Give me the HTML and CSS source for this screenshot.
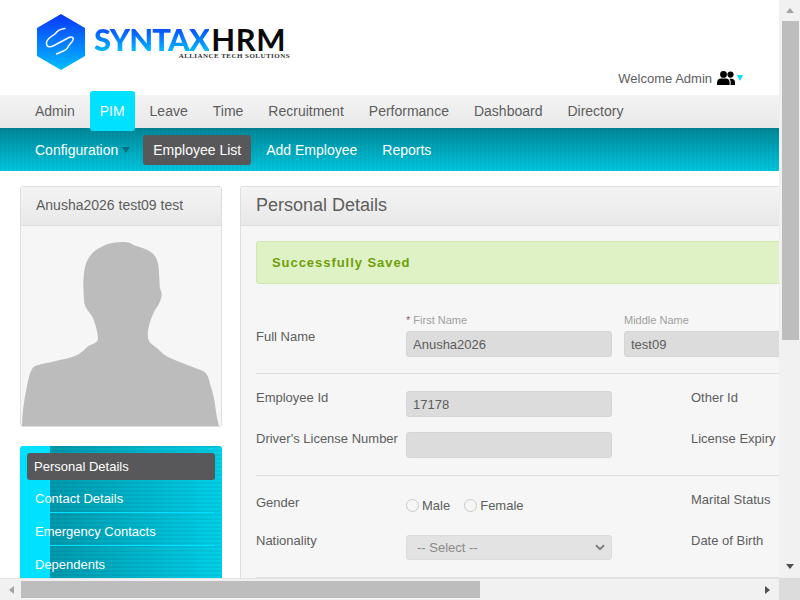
FILE: index.html
```html
<!DOCTYPE html>
<html lang="en">
<head>
  <meta charset="UTF-8">
  <title>SyntaxHRM - Personal Details</title>
  <link rel="stylesheet" href="styles.css">
</head>
<body>
  <div class="screen">
    <div class="viewport">
      <header class="top">
        <div class="brand">
          <svg class="brand-mark" width="48" height="56" viewBox="37 14 48 56">
            <defs>
              <linearGradient id="hex" x1="0" y1="0" x2="0" y2="1">
                <stop offset="0" stop-color="#0a35ff"/>
                <stop offset="1" stop-color="#00bfff"/>
              </linearGradient>
            </defs>
            <path d="M61 14 85 28V56L61 70 37 56V28Z" fill="url(#hex)"/>
            <path d="M65 28.5C60 29 57 31 55 34L52 36C49 38 46 41 46.5 44 47 48 51 47 54 45.5L69 37.5C72 36 74 38 73 40 72 43 69 44 68 47 67 50 64 51 61 52L56.5 54" fill="none" stroke="#fff" stroke-width="1.5" stroke-linecap="round"/>
          </svg>
          <div class="brand-text">
            <div class="wordmark"><span class="wordmark-blue">SYNTAX</span><span class="wordmark-dark">HRM</span></div>
            <div class="tagline">ALLIANCE TECH SOLUTIONS</div>
          </div>
        </div>
        <div class="welcome">
          <span>Welcome Admin</span>
          <svg class="users" width="18" height="14" viewBox="0 0 18 14">
            <circle cx="6.5" cy="3.4" r="3.4" fill="#000"/>
            <circle cx="13.5" cy="3.6" r="3.1" fill="#000"/>
            <path d="M0 14V11.5C0 9 2 7.6 4 7.6H9C11 7.6 12.6 9 12.6 11.5V14Z" fill="#000"/>
            <path d="M13.6 14V11C13.6 9.6 13 8.5 12.4 7.7H14.6C16.6 7.7 18 9.2 18 11.4V14Z" fill="#000"/>
          </svg>
          <span class="welcome-caret"></span>
        </div>
      </header>

      <nav class="menu">
        <a class="menu-item">Admin</a>
        <a class="menu-item active">PIM</a>
        <a class="menu-item">Leave</a>
        <a class="menu-item">Time</a>
        <a class="menu-item">Recruitment</a>
        <a class="menu-item">Performance</a>
        <a class="menu-item">Dashboard</a>
        <a class="menu-item">Directory</a>
      </nav>

      <nav class="submenu">
        <a class="submenu-item">Configuration<span class="submenu-caret"></span></a>
        <a class="submenu-item active">Employee List</a>
        <a class="submenu-item">Add Employee</a>
        <a class="submenu-item">Reports</a>
      </nav>

      <div class="content">
        <aside class="side">
          <div class="card">
            <div class="card-head">Anusha2026 test09 test</div>
            <div class="photo">
              <svg width="200" height="200" viewBox="21 226 200 200">
                <path d="M22 426C22 414 24 400 27 386 29 376 31 368 35 366 48 362 64 360 75 356 80 354 84 350 87 347 91 344 98 343 98 339 98 334 96 326 93 318 90 312 84 308 84 300 83 288 83 276 85 267 88 254 97 248 108 244 115 242 124 241 130 243 135 247 145 247 152 253 158 258 159 266 159 274 160 282 159 287 161 291 163 296 160 303 155 310 151 318 147 328 148 338 149 344 154 345 158 349 162 353 165 356 170 358 180 362 192 367 203 371 207 373 209 378 210 384 213 392 215 402 216 412 217 418 218 422 219 426Z" fill="#bcbcbc"/>
              </svg>
            </div>
          </div>
          <ul class="side-menu">
            <li class="side-item active">Personal Details</li>
            <li class="side-item">Contact Details</li>
            <li class="side-item">Emergency Contacts</li>
            <li class="side-item">Dependents</li>
          </ul>
        </aside>

        <main class="panel">
          <h1 class="panel-head">Personal Details</h1>
          <div class="panel-body">
            <div class="saved">Successfully Saved</div>

            <section class="name-row">
              <label class="row-label">Full Name</label>
              <div class="name-field">
                <span class="small-label"><em>*</em> First Name</span>
                <input class="text-input" type="text" value="Anusha2026" disabled>
              </div>
              <div class="name-field">
                <span class="small-label">Middle Name</span>
                <input class="text-input" type="text" value="test09" disabled>
              </div>
            </section>

            <section class="field-grid ids">
              <label>Employee Id</label>
              <input class="text-input" type="text" value="17178" disabled>
              <label class="far">Other Id</label>
              <label>Driver's License Number</label>
              <input class="text-input" type="text" disabled>
              <label class="far">License Expiry</label>
            </section>

            <section class="field-grid personal">
              <label class="gender-label">Gender</label>
              <div class="radios">
                <span class="radio"></span>Male
                <span class="radio second"></span>Female
              </div>
              <label class="far">Marital Status</label>
              <label>Nationality</label>
              <select class="select-input" disabled><option>-- Select --</option></select>
              <label class="far">Date of Birth</label>
            </section>
          </div>
        </main>
      </div>
    </div>

    <div class="bar-v">
      <span class="arrow up"></span>
      <span class="thumb-v"></span>
      <span class="arrow down"></span>
    </div>
    <div class="bar-h">
      <span class="arrow left"></span>
      <span class="thumb-h"></span>
      <span class="arrow right"></span>
    </div>
    <div class="bar-corner"></div>
  </div>
</body>
</html>
```
FILE: styles.css
```css
* { box-sizing: border-box; }
html, body { margin: 0; height: 100%; overflow: hidden; }
body { font-family: "Liberation Sans", Arial, sans-serif; font-size: 14px; color: #5d5d5d; background: #fff; }

.screen { display: grid; grid-template-columns: 779px 21px; grid-template-rows: 578px 22px; width: 800px; height: 600px; }
.viewport { overflow: hidden; min-width: 0; background: #fff; }

/* header */
.top { display: flex; justify-content: space-between; height: 95px; }
.brand { display: flex; padding: 14px 0 0 37px; }
.brand-text { margin: 11px 0 0 9px; width: 196px; }
.wordmark { display: flex; font-family: Lato, sans-serif; font-size: 31px; line-height: 28px; white-space: nowrap; }
.wordmark-blue { font-weight: 900; letter-spacing: -0.85px; background: linear-gradient(#0a3cff, #00c4ff); -webkit-background-clip: text; background-clip: text; color: transparent; }
.wordmark-dark { font-weight: 700; letter-spacing: 0.6px; color: #0a0a0a; margin-left: 2px; }
.tagline { font-family: "Liberation Serif", serif; font-weight: 700; font-size: 7px; line-height: 7px; letter-spacing: 0.45px; color: #333; text-align: right; white-space: nowrap; }
.welcome { display: flex; align-items: center; height: 16px; margin: 70px 36px 0 0; font-size: 13px; }
.users { margin: 0 2px 0 5px; }
.welcome-caret { border: 3px solid transparent; border-top: 6px solid #00e1ff; border-bottom: 0; }

.menu { display: flex; gap: 5px; height: 33px; padding-left: 25px; background: linear-gradient(#f4f4f4, #e8e8e8); }
.menu-item { padding: 0 10px; line-height: 33px; height: 33px; }
.menu-item.active { height: 40px; margin-top: -4px; line-height: 40px; background: #00e1ff; color: #fff; border-radius: 3px; position: relative; z-index: 1; }

.submenu { display: flex; align-items: center; gap: 5px; height: 43px; padding: 0 0 2px 25px; border-top: 2px solid #007f8e;
  background: repeating-linear-gradient(90deg, rgba(0,0,0,.035) 0 2px, transparent 2px 4px), linear-gradient(#008a9c, #00c6de); }
.submenu-item { padding: 0 10px; height: 30px; line-height: 30px; color: #fff; border-radius: 3px; white-space: nowrap; }
.submenu-item.active { background: #58585a; }
.submenu-caret { display: inline-block; width: 8px; margin-left: 4px; margin-right: -2px; vertical-align: 2px; border: 4px solid transparent; border-top: 6px solid #00707f; border-bottom: 0; }

/* body */
.content { display: flex; gap: 18px; width: 1256px; padding: 15px 20px 0; }
.side { width: 202px; flex: none; }
.card { border: 1px solid #dedede; border-radius: 3px; background: #f6f6f6; }
.card-head { height: 39px; line-height: 37px; padding-left: 15px; background: linear-gradient(#f4f4f4, #e8e8e8); border-bottom: 1px solid #dedede; }
.photo { height: 200px; }
.photo svg { display: block; }

.side-menu { list-style: none; margin: 19px 0 0; padding: 7px; height: 140px; border-radius: 3px;
  background: linear-gradient(90deg, #00e1ff 30px, transparent 30px), repeating-linear-gradient(rgba(0,0,0,.05) 0 2px, transparent 2px 4px), linear-gradient(90deg, #008fa3, #00d0e8); }
.side-item { height: 33px; line-height: 26px; padding-left: 8px; color: #fff; font-size: 13px; position: relative; }
.side-item.active { height: 27px; line-height: 28px; margin-bottom: 6px; background: #58585a; border-radius: 3px; padding-left: 7px; }
.side-item:nth-child(2)::after, .side-item:nth-child(3)::after { content: ""; position: absolute; left: 23px; right: 1px; bottom: 6px; height: 1px; background: #00e1ff; }

.panel { flex: 1; border: 1px solid #dedede; border-bottom: 0; border-radius: 3px 3px 0 0; background: #f6f6f6; height: 500px; font-size: 13px; }
.panel-head { margin: 0; height: 39px; line-height: 37px; padding-left: 15px; font-size: 18px; font-weight: 400; background: linear-gradient(#f4f4f4, #e8e8e8); border-bottom: 1px solid #dedede; }
.panel-body { padding: 15px 15px 0; }
.saved { height: 43px; line-height: 42px; padding-left: 15px; font-size: 13px; font-weight: 700; letter-spacing: 0.95px; color: #6f9e0a; background: #dff2c6; border: 1px solid #cfe9ae; border-radius: 3px; }

.name-row { display: flex; height: 90px; padding-top: 29px; border-bottom: 1px solid #dedede; }
.row-label { width: 150px; padding-top: 15px; line-height: 18px; }
.name-field { width: 206px; margin-right: 12px; }
.small-label { display: block; height: 18px; line-height: 14px; font-size: 11px; font-weight: 400; color: #a0a0a0; }
.small-label em { font-style: normal; color: #a05a6c; }
.name-field:last-child { width: 300px; }

.field-grid { display: grid; grid-template-columns: 150px 206px 79px 1fr; align-items: start; padding-top: 15px; padding-bottom: 17px; border-bottom: 1px solid #dedede; }
.field-grid label { line-height: 18px; white-space: nowrap; }
.ids { row-gap: 13px; }
.ids .text-input { margin-top: 2px; }
.personal { row-gap: 19px; }
.gender-label { margin-top: 3px; }
.far { grid-column: 4; }

.text-input { display: block; width: 100%; height: 26px; padding: 0 6px; border: 1px solid #d4d4d4; border-radius: 3px; background: #dcdcdc; font: inherit; color: #5d5d5d; }
.select-input { display: block; width: 100%; height: 25px; margin-top: 3px; padding-left: 10px; border: 1px solid #dcdcdc; border-radius: 3px; appearance: none; background: #e3e3e3 url("data:image/svg+xml,%3Csvg xmlns='http://www.w3.org/2000/svg' width='10' height='7'%3E%3Cpath d='M1 1.2 5 5.2 9 1.2' fill='none' stroke='%23808080' stroke-width='2'/%3E%3C/svg%3E") no-repeat right 6px center; font: inherit; color: #8a8a8a; opacity: 1; }
.radios { display: flex; align-items: center; height: 16px; margin-top: 6px; }
.radio { width: 13px; height: 13px; margin-right: 3px; border: 1px solid #c9c9c9; border-radius: 50%; }
.radio.second { margin-left: 14px; }

/* window scrollbars */
.bar-v { display: flex; flex-direction: column; align-items: center; background: #f1f1f1; grid-row: 1; grid-column: 2; padding: 0 0 0 1px; }
.thumb-v { width: 17px; height: 319px; margin-top: 8px; background: #bdbdbd; }
.bar-h { display: flex; align-items: center; background: #f1f1f1; border-top: 1px solid #e4e4e4; grid-row: 2; grid-column: 1; }
.thumb-h { width: 459px; height: 17px; background: #bdbdbd; margin-left: 7px; }
.bar-corner { background: #dcdcdc; grid-row: 2; grid-column: 2; }
.arrow { display: block; width: 0; height: 0; border: 4.5px solid transparent; }
.arrow.up { border-top: 0; border-bottom: 5px solid #a3a3a3; margin-top: 8px; }
.arrow.down { border-bottom: 0; border-top: 5px solid #505050; margin-top: auto; margin-bottom: 9px; }
.arrow.left { border-left: 0; border-right: 5px solid #a3a3a3; margin-left: 9px; }
.arrow.right { border-right: 0; border-left: 5px solid #505050; margin-left: auto; margin-right: 9px; }
```
